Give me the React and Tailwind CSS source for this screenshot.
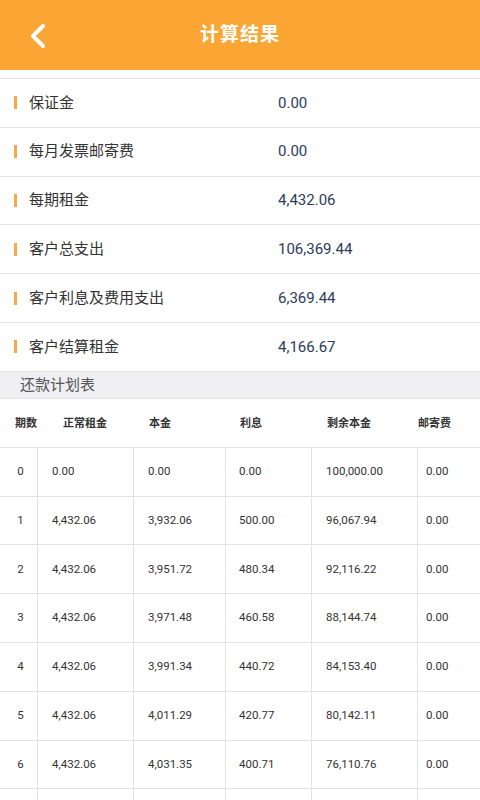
import {useState} from "react";

const summary = [
    {label: "保证金", value: "0.00"},
    {label: "每月发票邮寄费", value: "0.00"},
    {label: "每期租金", value: "4,432.06"},
    {label: "客户总支出", value: "106,369.44"},
    {label: "客户利息及费用支出", value: "6,369.44"},
    {label: "客户结算租金", value: "4,166.67"},
];

const plan = [
    ["0", "0.00", "0.00", "0.00", "100,000.00", "0.00"],
    ["1", "4,432.06", "3,932.06", "500.00", "96,067.94", "0.00"],
    ["2", "4,432.06", "3,951.72", "480.34", "92,116.22", "0.00"],
    ["3", "4,432.06", "3,971.48", "460.58", "88,144.74", "0.00"],
    ["4", "4,432.06", "3,991.34", "440.72", "84,153.40", "0.00"],
    ["5", "4,432.06", "4,011.29", "420.77", "80,142.11", "0.00"],
    ["6", "4,432.06", "4,031.35", "400.71", "76,110.76", "0.00"],
    ["7", "", "", "", "", ""],
];

const heads = ["期数", "正常租金", "本金", "利息", "剩余本金", "邮寄费"];
const headPad = ["pl-[15px]", "pl-[25px]", "pl-[15px]", "pl-[14px]", "pl-[15px]", "pl-0"];

export default function App(){
    const [rows] = useState(plan);

    return(
        <div className="w-[480px] h-[800px] overflow-hidden bg-white font-['Roboto','Noto_Sans_CJK_SC',sans-serif]">
            <div className="h-[70px] bg-[#fba634] flex items-center relative">
                <button className="absolute left-[28px] top-[22px] w-[20px] h-[28px] flex items-center justify-center">
                    <svg width="18" height="26" viewBox="0 0 18 26" fill="none">
                        <path d="M14 3L4 13l10 10" stroke="white" strokeWidth="4" strokeLinecap="round" strokeLinejoin="round"/>
                    </svg>
                </button>
                <h1 className="flex-1 text-center text-white text-[19px] font-bold tracking-[1px]">计算结果</h1>
            </div>

            <div className="pt-[8px]">
                <div className="border-t border-[#e3e3e3]">
                    {summary.map((s) => (
                        <div key={s.label} className="h-[48.8px] flex items-center border-b border-[#e3e3e3]">
                            <span className="ml-[14px] w-[3px] h-[13px] bg-[#f5a94a]"></span>
                            <span className="ml-[12px] w-[249px] text-[15px] text-[#333]">{s.label}</span>
                            <span className="text-[15px] text-[#2c3b5e]">{s.value}</span>
                        </div>
                    ))}
                </div>
            </div>

            <div className="h-[27px] bg-[#efeff4] flex items-center pl-[20px] pt-[1px] text-[15px] text-[#555] border-b border-[#e3e3e3]">还款计划表</div>

            <div className="grid grid-cols-[38px_96px_92px_86px_106px_1fr] h-[49px] items-center border-b border-[#e3e3e3] text-[11px] font-bold text-[#333]">
                {heads.map((h, i) => (
                    <div key={h} className={headPad[i] + " pt-[2px]"}>{h}</div>
                ))}
            </div>

            {rows.map((r) => (
                <div key={r[0]} className="grid grid-cols-[38px_96px_92px_86px_106px_1fr] h-[48.8px] border-b border-[#e3e3e3] text-[11.5px] text-[#333]">
                    <div className="flex items-center justify-center pl-[4px] border-r border-[#e3e3e3]">{r[5] ? r[0] : ""}</div>
                    <div className="flex items-center pl-[14px] border-r border-[#e3e3e3]">{r[1]}</div>
                    <div className="flex items-center pl-[14px] border-r border-[#e3e3e3]">{r[2]}</div>
                    <div className="flex items-center pl-[13px] border-r border-[#e3e3e3]">{r[3]}</div>
                    <div className="flex items-center pl-[14px] border-r border-[#e3e3e3]">{r[4]}</div>
                    <div className="flex items-center pl-[8px]">{r[5]}</div>
                </div>
            ))}
        </div>
    )
}
